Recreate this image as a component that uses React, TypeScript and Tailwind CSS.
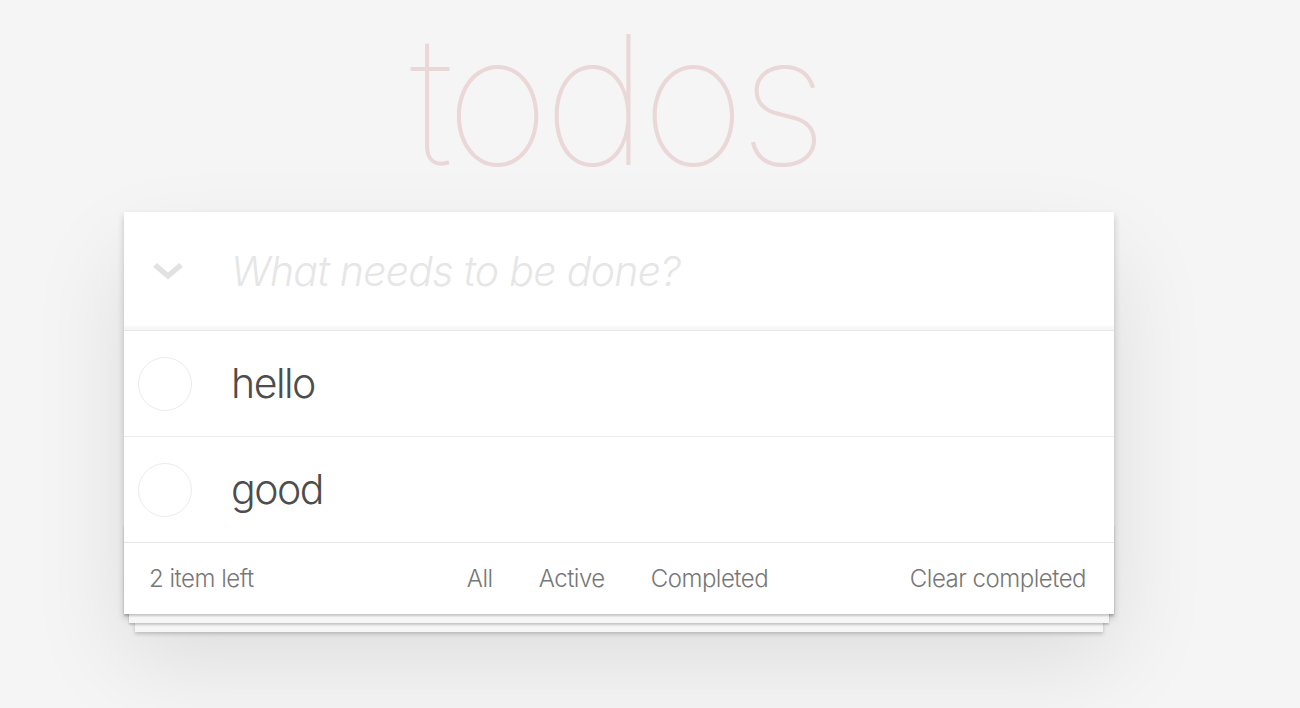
import React from "react";

const font = { fontFamily: "Inter, 'Helvetica Neue', Helvetica, Arial, sans-serif" };

function Item({ text, last }: { text: string; last?: boolean }) {
  return (
    <li
      className={
        "flex items-center " +
        (last ? "h-[105px]" : "h-[106px] border-b border-[#ededed]")
      }
    >
      <div className="ml-[14px] h-[54px] w-[54px] shrink-0 rounded-full border-[1.5px] border-[#ececec]" />
      <span className="ml-[39px] text-[41px] font-light leading-none tracking-[-1.5px] text-[#4d4d4d]">
        {text}
      </span>
    </li>
  );
}

export default function App() {
  return (
    <div className="min-h-screen w-full overflow-hidden bg-[#f5f5f5]" style={font}>
      <div className="ml-[124px] w-[990px]">
        <h1 className="-mt-[9px] h-[221px] pr-[7px] text-center text-[180px] font-thin leading-[218px] tracking-[-6.5px] text-[rgba(175,47,47,0.15)]">
          todos
        </h1>
        <section className="relative bg-white shadow-[0_4px_7px_rgba(0,0,0,0.2),0_45px_90px_rgba(0,0,0,0.1)]">
          <header className="flex h-[118px] items-center shadow-[inset_0_-4px_2px_rgba(0,0,0,0.03)]">
            <div className="ml-[28px] flex w-[32px] justify-center">
              <svg width="32" height="20" viewBox="0 0 32 20">
                <polyline
                  points="3,4 16,15 29,4"
                  fill="none"
                  stroke="#e2e2e2"
                  strokeWidth="5.5"
                  strokeLinejoin="miter"
                />
              </svg>
            </div>
            <span className="ml-[47px] text-[41px] font-light italic leading-none tracking-[-0.7px] text-[#e6e6e6]">
              What needs to be done?
            </span>
          </header>
          <ul className="border-t border-[#e6e6e6]">
            <Item text="hello" />
            <Item text="good" last />
          </ul>
          <footer className="relative grid h-[72px] grid-cols-[1fr_auto_1fr] items-center border-t border-[#e6e6e6] pl-[25px] pr-[28px] text-[24px] font-light tracking-[-0.5px] text-[#777]">
            <div className="pointer-events-none absolute inset-x-0 bottom-0 h-[90px] shadow-[0_2px_2px_rgba(0,0,0,0.2),0_14px_0_-5px_#f6f6f6,0_16px_2px_-5px_rgba(0,0,0,0.2),0_29px_0_-11px_#f6f6f6,0_31px_4px_-11px_rgba(0,0,0,0.2)]" />
            <span className="relative">2 item left</span>
            <ul className="relative flex gap-[46px]">
              <li>All</li>
              <li>Active</li>
              <li>Completed</li>
            </ul>
            <span className="relative text-right">Clear completed</span>
          </footer>
        </section>
      </div>
    </div>
  );
}
